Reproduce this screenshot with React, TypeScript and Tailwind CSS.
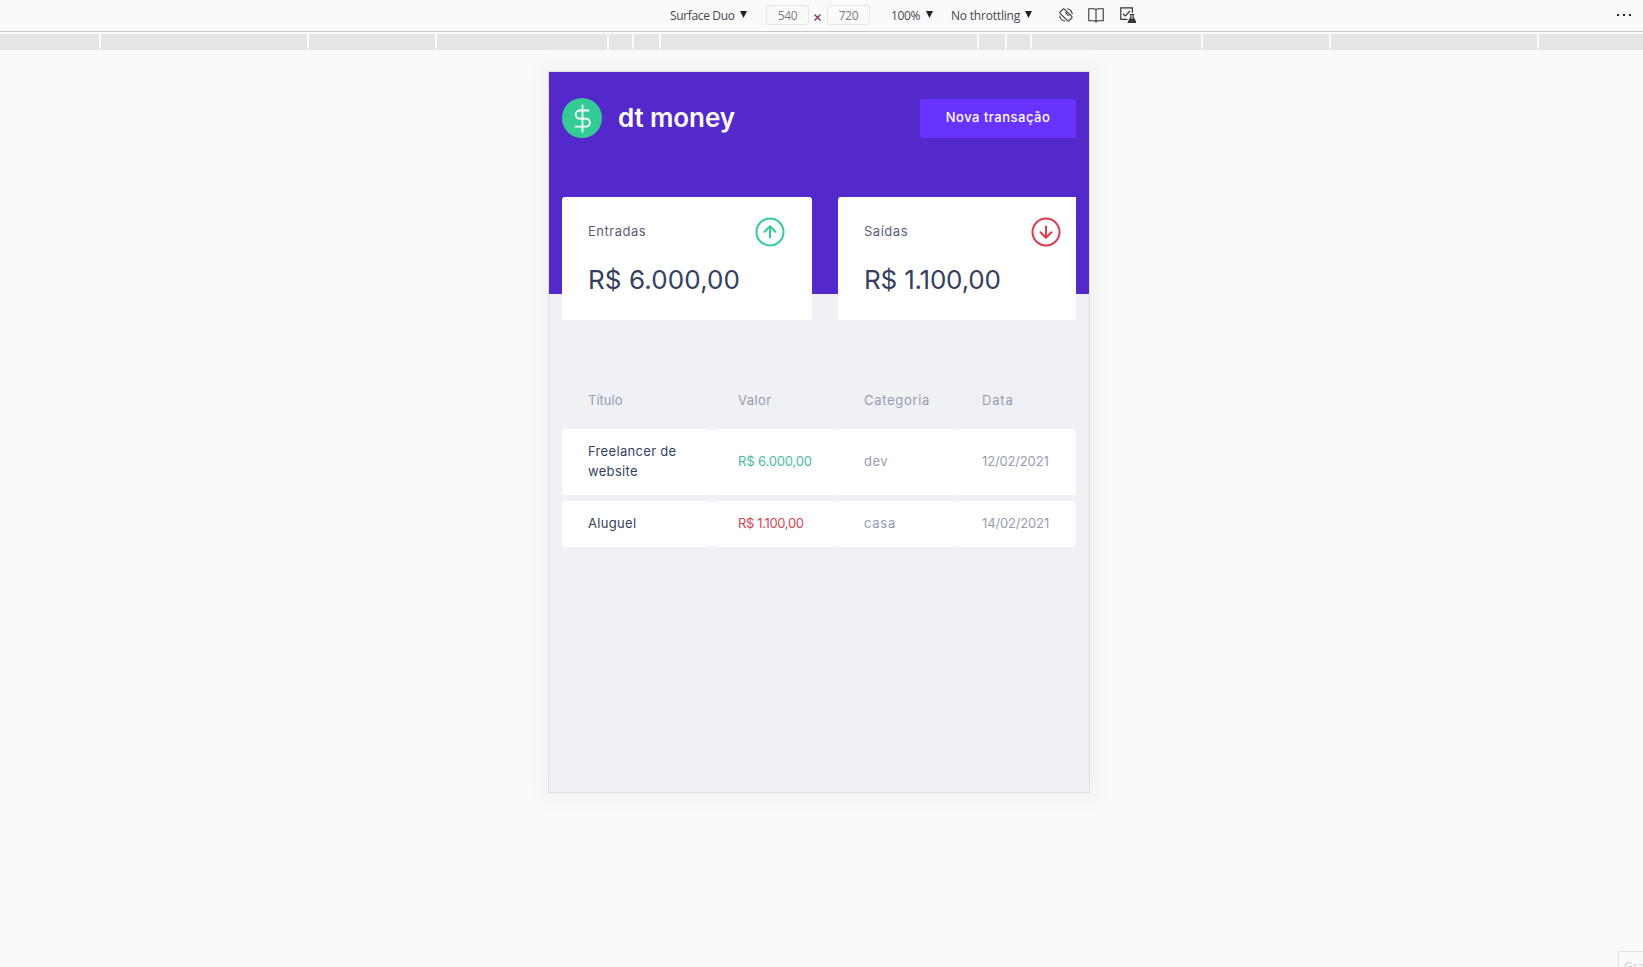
import React from "react";

const rulerCells = [
  "w-[99px]", "w-[206px]", "w-[126px]", "w-[170px]", "w-[23px]", "w-[25px]", "w-[316px]",
  "w-[26px]", "w-[23px]", "w-[169px]", "w-[126px]", "w-[206px]", "w-[104px]",
];

function Caret({ className }: { className: string }) {
  return (
    <svg className={`h-[7px] w-[7px] shrink-0 ${className}`} viewBox="0 0 7 7">
      <path d="M0 0h7L3.5 7z" fill="#202124" />
    </svg>
  );
}

function Toolbar() {
  return (
    <div className="flex h-[31px] items-center pb-[2px] pl-[670px] text-[12px] leading-4 whitespace-nowrap text-[#45454f]">
      <span className="mt-[2px] w-[64px] tracking-[-0.35px]">Surface Duo</span>
      <Caret className="ml-[6px]" />
      <span className="ml-[19px] h-5 w-[43px] rounded-[3px] border border-[#e6e6e6] text-center leading-[19px] tracking-[-0.3px] text-[#7b7b82]">540</span>
      <svg className="mt-[5px] ml-[5px] h-[7px] w-[7px]" viewBox="0 0 7 7">
        <path d="M.5.5l6 6M6.500.5l-6 6" stroke="#7d3168" strokeWidth="1.3" />
      </svg>
      <span className="ml-[6px] h-5 w-[43px] rounded-[3px] border border-[#e6e6e6] text-center leading-[19px] tracking-[-0.3px] text-[#7b7b82]">720</span>
      <span className="mt-[2px] ml-[21px] w-[30px] tracking-[-0.4px]">100%</span>
      <Caret className="ml-[5px]" />
      <span className="mt-[2px] ml-[18px] w-[69px] tracking-[-0.2px]">No throttling</span>
      <Caret className="ml-[5px]" />
      <svg className="ml-[26px] h-4 w-4" viewBox="0 0 16 16" fill="none" stroke="#35353c" strokeWidth="1.1">
        <rect x="5" y="1.700" width="6" height="12.600" rx="1.200" transform="rotate(-45 8 8)" />
        <path d="M7.200 5.300l3.500 3.500" />
        <path d="M1.700 8.800a6.300 6.300 0 0 0 5.400 5.400M14.300 7.200a6.300 6.300 0 0 0-5.400-5.400" />
      </svg>
      <svg className="ml-[14px] h-4 w-4" viewBox="0 0 16 16" fill="none" stroke="#35353c" strokeWidth="1.1">
        <path d="M.8 1.800h5.700L8 2.800l1.500-1h5.700v12H9.500L8 14.800l-1.500-1H.8zM8 2.800v12" />
      </svg>
      <svg className="ml-[16px] h-4 w-4" viewBox="0 0 16 16" fill="none" stroke="#35353c" strokeWidth="1.2">
        <path d="M7.500 12.400H.8V.8h11.600v5M3 6.700l2.300 2.200L10 4" />
        <path d="M9.800 7.500h4.400M10.900 7.500v3L8.600 15h6.800l-2.300-4.500v-3" />
        <path d="M10 12h4l1.600 3.300H8.400z" fill="#35353c" />
      </svg>
      <div className="mt-[1px] mr-[12px] ml-auto flex gap-[4px]">
        <i className="h-[2px] w-[2px] bg-[#202124]" />
        <i className="h-[2px] w-[2px] bg-[#202124]" />
        <i className="h-[2px] w-[2px] bg-[#202124]" />
      </div>
    </div>
  );
}

function Logo() {
  return (
    <svg className="h-10 w-10" viewBox="0 0 40 40" fill="none">
      <circle cx="20" cy="20" r="20" fill="#33cc95" />
      <path d="M20.500 7.500v26M26.500 12.500h-8.700a4.100 4.100 0 0 0 0 8.200h6a4 4 0 0 1 0 8H13.500" stroke="#fff" strokeWidth="1.800" strokeLinecap="round" />
    </svg>
  );
}

function ArrowCircle({ down = false }: { down?: boolean }) {
  return (
    <svg className="h-[30px] w-[30px]" viewBox="0 0 30 30" fill="none" stroke={down ? "#dd3a50" : "#33cc95"} strokeWidth="2" strokeLinecap="round" strokeLinejoin="round">
      <circle cx="15" cy="15" r="13.500" />
      <path d={down ? "M15 9.500v11M9.500 15.300l5.500 5.400 5.500-5.400" : "M15 20.500v-11M9.500 14.700L15 9.300l5.500 5.400"} />
    </svg>
  );
}

function Card({ label, value, down, valueClass }: { label: string; value: string; down?: boolean; valueClass: string }) {
  return (
    <div className="h-[123px] w-[250px] shrink-0 rounded-[3px] bg-white px-[26px] pt-[20px] text-[#363f5f]">
      <div className="flex items-center justify-between">
        <span className="pb-[2px] text-[13px] leading-5 tracking-[0.52px] text-[#5b6079]">{label}</span>
        <span className="mr-[1px]"><ArrowCircle down={down} /></span>
      </div>
      <div className={`mt-[13px] text-[26px] leading-[39px] whitespace-nowrap ${valueClass}`}>{value}</div>
    </div>
  );
}

const rows = [
  {
    title: "Freelancer de website", value: "R$ 6.000,00", category: "dev", date: "12/02/2021",
    height: "h-[66px]", valueClass: "text-[#45bd9b] tracking-[-0.15px]", categoryClass: "tracking-[0.5px]",
  },
  {
    title: "Aluguel", value: "R$ 1.100,00", category: "casa", date: "14/02/2021",
    height: "h-[46px]", valueClass: "text-[#d54550] tracking-[-0.35px]", categoryClass: "tracking-[0.75px]",
  },
];
const cell = "flex items-center rounded-[3px] pb-[2px] pl-[26px] whitespace-nowrap";

export default function App() {
  return (
    <div className="relative h-[967px] w-full overflow-hidden bg-[#fafafa] font-['Open_Sans',sans-serif]">
      <Toolbar />
      <div className="h-px bg-[#c8c8c8]" />
      <div className="mt-[2px] flex h-4 gap-[2px] bg-[#e5e5e5]">
        {rulerCells.map((w, i) => (
          <div key={i} className={`relative h-4 shrink-0 ${w}`}>
            {i < rulerCells.length - 1 && <i className="absolute top-0 left-full h-[15px] w-[2px] bg-[#fafafa]" />}
          </div>
        ))}
      </div>
      <div className="mt-[21px] ml-[548px] h-[722px] w-[542px] border border-[#e0e0e2] bg-[#eff1f5] font-['Inter',sans-serif] shadow-[0_0_20px_8px_rgba(0,0,0,0.035)]">
        <header className="h-[222px] bg-[#5429cc] px-[13px] pt-[26px]">
          <div className="flex h-10 items-center">
            <Logo />
            <h1 className="ml-4 text-[26px] leading-9 font-semibold tracking-[-0.1px] text-white">dt money</h1>
            <button className="mt-[1px] ml-auto h-[39px] w-[156px] rounded-[3px] bg-[#6933ff] pb-[2px] text-[13px] font-medium tracking-[0.5px] text-white">Nova transação</button>
          </div>
        </header>
        <main className="-mt-[97px] px-[13px]">
          <section className="flex gap-[26px] overflow-hidden">
            <Card label="Entradas" value="R$ 6.000,00" valueClass="tracking-[0.1px]" />
            <Card label="Saídas" value="R$ 1.100,00" down valueClass="tracking-[-0.2px]" />
          </section>
          <section className="mt-[58px] text-[13px] leading-5 text-[#969cb3]">
            <div className="grid h-[46px] grid-cols-[150px_126px_118px_120px]">
              <div className={cell}>Título</div>
              <div className={`${cell} tracking-[0.45px]`}>Valor</div>
              <div className={`${cell} tracking-[0.7px]`}>Categoria</div>
              <div className={`${cell} tracking-[0.8px]`}>Data</div>
            </div>
            <div className="mt-[5px] flex flex-col gap-[6px]">
              {rows.map((row) => (
                <div key={row.title} className={`grid grid-cols-[150px_126px_118px_120px] ${row.height}`}>
                  <div className="flex items-center rounded-[3px] bg-white pr-[26px] pb-[2px] pl-[26px] tracking-[0.32px] text-[#363f5f]">{row.title}</div>
                  <div className={`${cell} bg-white ${row.valueClass}`}>{row.value}</div>
                  <div className={`${cell} bg-white ${row.categoryClass}`}>{row.category}</div>
                  <div className={`${cell} bg-white tracking-[-0.15px]`}>{row.date}</div>
                </div>
              ))}
            </div>
          </section>
        </main>
      </div>
      <div className="absolute top-[951px] left-[1618px] h-10 w-40 border border-[#e2e2e2] pt-[7px] pl-[5px] text-[12px] leading-4 text-[#cfcfd2]">Gravar</div>
    </div>
  );
}
